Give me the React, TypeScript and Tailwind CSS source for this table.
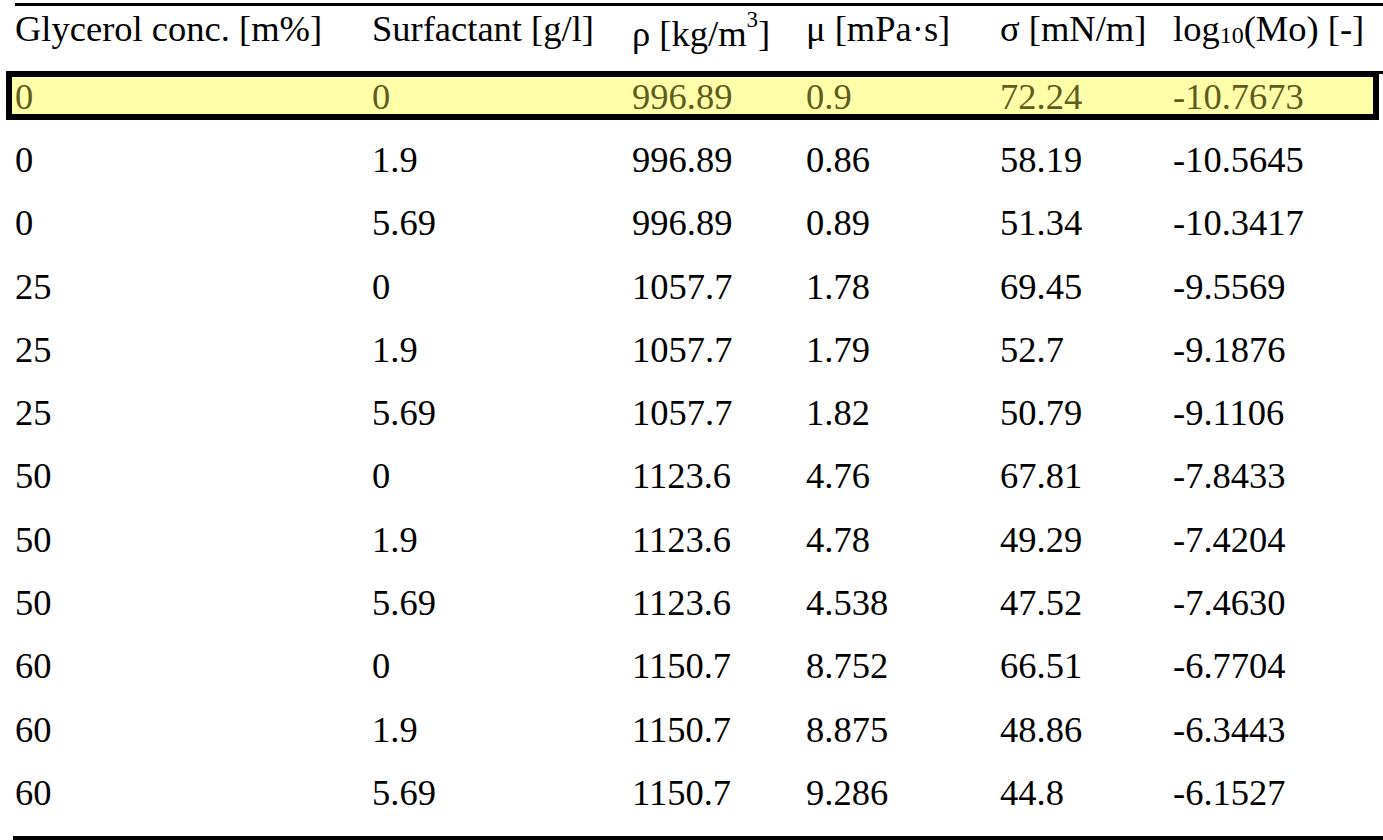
import React from 'react';

const colWidths = ['w-[357px]', 'w-[260px]', 'w-[174px]', 'w-[194px]', 'w-[173px]', 'flex-1'];

const highlighted = ['0', '0', '996.89', '0.9', '72.24', '-10.7673'];

const rows = [
  ['0', '1.9', '996.89', '0.86', '58.19', '-10.5645'],
  ['0', '5.69', '996.89', '0.89', '51.34', '-10.3417'],
  ['25', '0', '1057.7', '1.78', '69.45', '-9.5569'],
  ['25', '1.9', '1057.7', '1.79', '52.7', '-9.1876'],
  ['25', '5.69', '1057.7', '1.82', '50.79', '-9.1106'],
  ['50', '0', '1123.6', '4.76', '67.81', '-7.8433'],
  ['50', '1.9', '1123.6', '4.78', '49.29', '-7.4204'],
  ['50', '5.69', '1123.6', '4.538', '47.52', '-7.4630'],
  ['60', '0', '1150.7', '8.752', '66.51', '-6.7704'],
  ['60', '1.9', '1150.7', '8.875', '48.86', '-6.3443'],
  ['60', '5.69', '1150.7', '9.286', '44.8', '-6.1527'],
];

const headers: React.ReactNode[] = [
  'Glycerol conc. [m%]',
  'Surfactant [g/l]',
  <>
    ρ [kg/m<span className="text-[23px] align-[19px] leading-none">3</span>]
  </>,
  'μ [mPa·s]',
  'σ [mN/m]',
  <>
    log<span className="text-[24px] align-[-2px] leading-none">10</span>(Mo) [-]
  </>,
];

const Cells = ({ values }: { values: React.ReactNode[] }) => (
  <>
    {values.map((v, i) => (
      <div key={i} className={`${colWidths[i]} whitespace-nowrap`}>
        {v}
      </div>
    ))}
  </>
);

export default function App() {
  return (
    <div
      className="w-[1383px] h-[840px] bg-white text-black text-[36.5px] overflow-hidden"
      style={{ fontFamily: '"Liberation Serif", "Times New Roman", serif' }}
    >
      <div className="pt-[3px]">
        <div className="ml-[15px] h-[3px] bg-black" />
      </div>

      <div className="flex h-[65px] pl-[15px] pt-[2px] leading-[42px]">
        <Cells values={headers} />
      </div>

      <div className="ml-[15px] h-[3px] bg-black" />

      <div className="-mt-[3px] ml-[6px] w-[1373px] h-[49px] border-[6px] border-black bg-[#ffffaa] text-[#5e5c1e] flex pl-[3px] leading-[39px]">
        <Cells values={highlighted} />
      </div>

      <div className="mt-[8px]">
        {rows.map((r, i) => (
          <div key={i} className="flex pl-[15px] h-[63.3px] leading-[63.3px]">
            <Cells values={r} />
          </div>
        ))}
      </div>

      <div className="mt-[11.7px] ml-[13px] h-[4px] bg-black" />
    </div>
  );
}
